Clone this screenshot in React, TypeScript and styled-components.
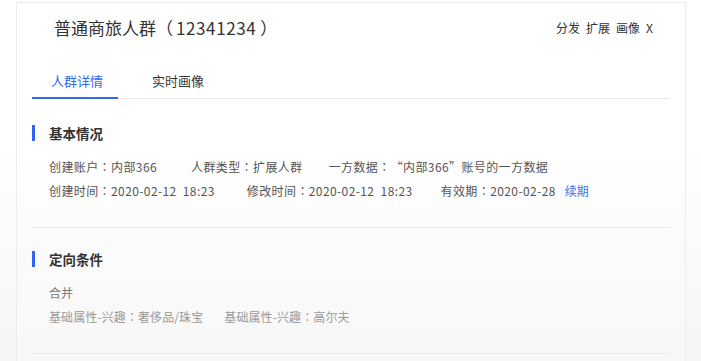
import React from "react";
import styled, { createGlobalStyle } from "styled-components";

const Global = createGlobalStyle`
  html, body { margin: 0; padding: 0; background: #fff; }
  body {
    font-family: "Noto Sans CJK SC", "Noto Sans", sans-serif;
    color: #333;
    text-spacing-trim: space-all;
  }
  * { box-sizing: border-box; }
`;

const Page = styled.div`
  width: 701px;
  height: 361px;
  overflow: hidden;
  padding: 2px 15px 0 16px;
  background: linear-gradient(#fff 0, #fff 140px, #f5f5f5 100%);
`;

const Card = styled.div`
  height: 100%;
  border: 1px solid #ececec;
  border-bottom: none;
  background: linear-gradient(#fff 0, #fff 140px, #f7f7f7 100%);
  display: flex;
  flex-direction: column;
`;

const Header = styled.div`
  display: flex;
  align-items: center;
  justify-content: space-between;
  height: 50px;
  padding: 0 32px 1px 37px;
`;

const Title = styled.h1`
  margin: 0;
  font-size: 17px;
  font-weight: 400;
  color: #333;
  white-space: nowrap;
  flex-shrink: 0;
`;

const Paren = styled.span<{ $open?: boolean }>`
  margin: ${(p) => (p.$open ? "0 3px 0 0" : "0 0 0 4px")};
`;

const Num = styled.span`
  letter-spacing: 0.6px;
`;

const Actions = styled.div`
  display: flex;
  gap: 6px;
  font-size: 12px;
  color: #333;
`;

const Action = styled.span``;

const Tabs = styled.div`
  display: flex;
  gap: 15px;
  margin: 0 15px;
  padding-top: 18px;
  border-bottom: 1px solid #e6e6e6;
`;

const Tab = styled.div<{ $active?: boolean }>`
  padding: 0 15px 6px 19px;
  line-height: 20px;
  font-size: 13px;
  color: ${(p) => (p.$active ? "#2f6bf0" : "#333")};
  border-bottom: 2px solid ${(p) => (p.$active ? "#2f6bf0" : "transparent")};
  margin-bottom: -1px;
`;

const Section = styled.div<{ $top: number }>`
  margin: 0 15px;
  padding: ${(p) => p.$top}px 0 24px;
  border-bottom: 1px solid #e8e8e8;
`;

const Heading = styled.h2`
  margin: 0 0 12px;
  display: flex;
  align-items: center;
  gap: 14px;
  font-size: 13.5px;
  font-weight: 700;
  line-height: 20px;
  color: #333;
  &::before {
    content: "";
    width: 3px;
    height: 16px;
    background: #2f63f5;
  }
`;

const Row = styled.div`
  display: flex;
  padding-left: 17px;
  line-height: 24px;
  font-size: 12px;
  white-space: pre;
`;

const Item = styled.span<{ $gap?: number; $muted?: boolean }>`
  margin-right: ${(p) => p.$gap ?? 0}px;
  color: ${(p) => (p.$muted ? "#9a9a9a" : "#555")};
  letter-spacing: ${(p) => (p.$muted ? "0.1px" : "0.4px")};
`;

const Colon = styled.span`
  font-family: "Noto Sans CJK TC", "Noto Sans CJK SC", sans-serif;
`;

const Plain = styled.span`
  color: #777;
`;

const Link = styled.a`
  color: #3a74f0;
  text-decoration: none;
`;

type FieldProps = { label: string; value: string; gap?: number; muted?: boolean };

function Field({ label, value, gap, muted }: FieldProps) {
  return (
    <Item $gap={gap} $muted={muted}>
      {label}
      <Colon>：</Colon>
      {value}
    </Item>
  );
}

export default function App() {
  return (
    <>
      <Global />
      <Page>
        <Card>
          <Header>
            <Title>
              普通商旅人群<Paren $open>（</Paren>
              <Num>12341234</Num>
              <Paren>）</Paren>
            </Title>
            <Actions>
              <Action>分发</Action>
              <Action>扩展</Action>
              <Action>画像</Action>
              <Action>X</Action>
            </Actions>
          </Header>
          <Tabs>
            <Tab $active>人群详情</Tab>
            <Tab>实时画像</Tab>
          </Tabs>
          <Section $top={24}>
            <Heading>基本情况</Heading>
            <Row>
              <Field label="创建账户" value="内部366" gap={34} />
              <Field label="人群类型" value="扩展人群" gap={26} />
              <Field label="一方数据" value="“内部366”账号的一方数据" />
            </Row>
            <Row>
              <Field label="创建时间" value="2020-02-12  18:23" gap={32} />
              <Field label="修改时间" value="2020-02-12  18:23" gap={28} />
              <Field label="有效期" value="2020-02-28" gap={9} />
              <Link href="#">续期</Link>
            </Row>
          </Section>
          <Section $top={21}>
            <Heading>定向条件</Heading>
            <Row>
              <Plain>合并</Plain>
            </Row>
            <Row>
              <Field label="基础属性-兴趣" value="奢侈品/珠宝" gap={21} muted />
              <Field label="基础属性-兴趣" value="高尔夫" muted />
            </Row>
          </Section>
        </Card>
      </Page>
    </>
  );
}
